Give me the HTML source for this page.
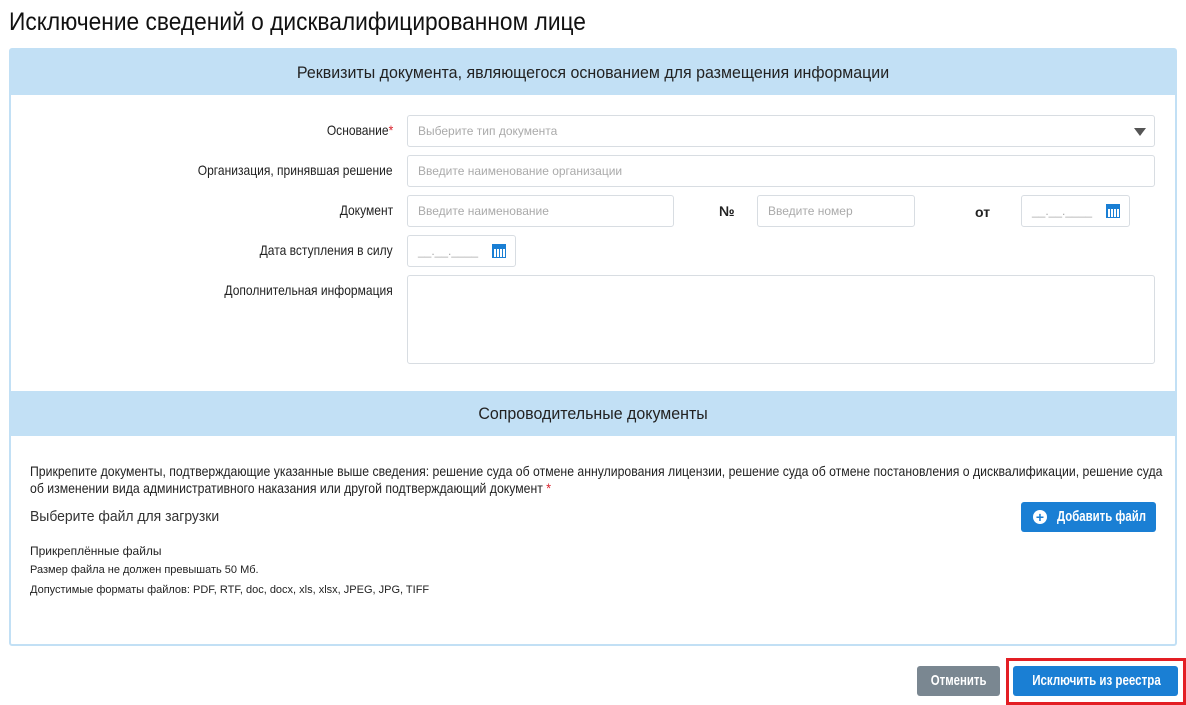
<!DOCTYPE html>
<html><head><meta charset="utf-8"><style>
*{box-sizing:border-box;margin:0;padding:0}
body{width:1186px;height:705px;background:#fff;font-family:"Liberation Sans",sans-serif;color:#222;position:relative;overflow:hidden}
.a{position:absolute;white-space:nowrap}
.c{display:inline-block;transform-origin:left center}
.title{left:9px;top:8px;font-size:25px;color:#111}
.panel{left:9px;top:48px;width:1168px;height:598px;border:2px solid #c2e0f5;border-radius:3px}
.hd{left:11px;width:1164px;height:45px;background:#c2e0f5;font-size:17px;text-align:center;line-height:45px;color:#222}
.lbl{font-size:14px;text-align:right;right:793px;color:#222;transform:scaleX(.86);transform-origin:right center}
.inp{border:1px solid #d8dde2;border-radius:3px;height:32px;font-size:12px;color:#aaa;line-height:30px;padding-left:10px}
.cal{position:absolute;right:9px;top:8px;width:14px;height:14px;background:#1a7fd4}
.cal:before{content:"";position:absolute;left:1px;right:1px;top:5px;bottom:1px;background:repeating-linear-gradient(90deg,#1a7fd4 0 1px,#fff 1px 3px)}
.sm{font-size:11px;color:#222}
.btn{border-radius:3px;color:#fff;font-size:15px;text-align:center;font-weight:bold}
</style></head><body>
<div class="a title"><span class="c" style="transform:scaleX(.91)">Исключение сведений о дисквалифицированном лице</span></div>
<div class="a panel"></div>
<div class="a hd" style="top:50px"><span class="c" style="transform:scaleX(.94);transform-origin:center">Реквизиты документа, являющегося основанием для размещения информации</span></div>
<div class="a lbl" style="top:122px">Основание<span style="color:#d9232d">*</span></div>
<div class="a inp" style="left:407px;top:115px;width:748px">Выберите тип документа<span style="position:absolute;right:8px;top:12px;border-left:6px solid transparent;border-right:6px solid transparent;border-top:8px solid #555"></span></div>
<div class="a lbl" style="top:162px">Организация, принявшая решение</div>
<div class="a inp" style="left:407px;top:155px;width:748px">Введите наименование организации</div>
<div class="a lbl" style="top:202px">Документ</div>
<div class="a inp" style="left:407px;top:195px;width:267px">Введите наименование</div>
<div class="a" style="left:719px;top:203px;font-size:14px;font-weight:bold">№</div>
<div class="a inp" style="left:757px;top:195px;width:158px">Введите номер</div>
<div class="a" style="left:975px;top:204px;font-size:14px;font-weight:bold">от</div>
<div class="a inp" style="left:1021px;top:195px;width:109px">__.__.____<span class="cal"></span></div>
<div class="a lbl" style="top:242px">Дата вступления в силу</div>
<div class="a inp" style="left:407px;top:235px;width:109px">__.__.____<span class="cal"></span></div>
<div class="a lbl" style="top:282px">Дополнительная информация</div>
<div class="a inp" style="left:407px;top:275px;width:748px;height:89px"></div>
<div class="a hd" style="top:391px"><span class="c" style="transform:scaleX(.94);transform-origin:center">Сопроводительные документы</span></div>
<div class="a" style="left:30px;top:463px;font-size:14px;line-height:17px"><span class="c" style="transform:scaleX(.875)">Прикрепите документы, подтверждающие указанные выше сведения: решение суда об отмене аннулирования лицензии, решение суда об отмене постановления о дисквалификации, решение суда</span><br><span class="c" style="transform:scaleX(.875)">об изменении вида административного наказания или другой подтверждающий документ <span style="color:#d9232d">*</span></span></div>
<div class="a" style="left:30px;top:508px;font-size:15px;color:#333"><span class="c" style="transform:scaleX(.93)">Выберите файл для загрузки</span></div>
<div class="a btn" style="left:1021px;top:502px;width:135px;height:30px;background:#1a7fd4;line-height:30px"><span style="position:absolute;left:12px;top:8px;width:14px;height:14px;border-radius:50%;background:#fff;color:#1a7fd4;font-weight:bold;font-size:14px;line-height:14px">+</span><span class="c" style="position:absolute;left:36px;transform:scaleX(.76)">Добавить файл</span></div>
<div class="a sm" style="left:30px;top:544px;font-size:12px">Прикреплённые файлы</div>
<div class="a sm" style="left:30px;top:564px">Размер файла не должен превышать 50 Мб.</div>
<div class="a sm" style="left:30px;top:584px">Допустимые форматы файлов: PDF, RTF, doc, docx, xls, xlsx, JPEG, JPG, TIFF</div>
<div class="a btn" style="left:917px;top:666px;width:83px;height:30px;background:#7a8791;line-height:30px"><span class="c" style="transform:scaleX(.76);transform-origin:center">Отменить</span></div>
<div class="a" style="left:1006px;top:658px;width:180px;height:47px;border:3px solid #e31e24"></div>
<div class="a btn" style="left:1013px;top:666px;width:165px;height:30px;background:#1a7fd4;line-height:30px"><span class="c" style="transform:scaleX(.77);transform-origin:center">Исключить из реестра</span></div>
</body></html>
